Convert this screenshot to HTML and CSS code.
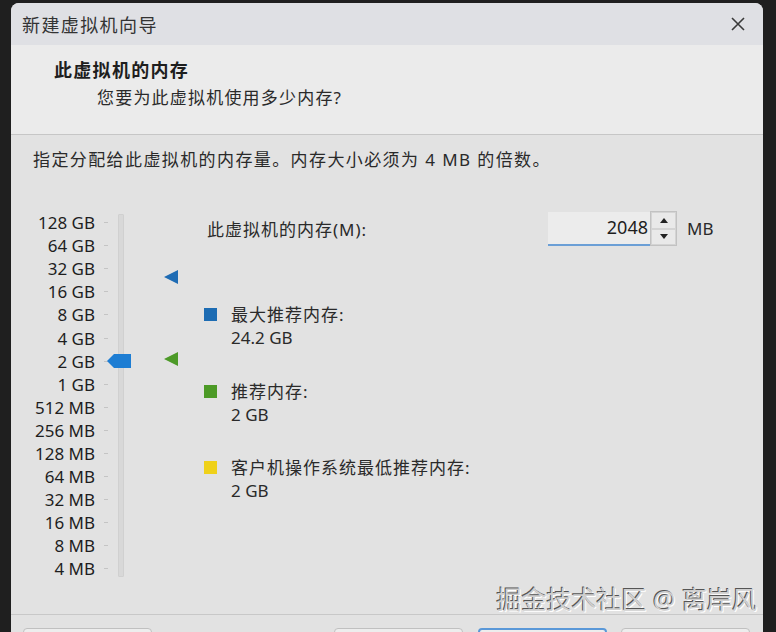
FILE: index.html
```html
<!DOCTYPE html>
<html lang="zh-CN">
<head>
<meta charset="utf-8">
<title>新建虚拟机向导</title>
<link rel="stylesheet" href="styles.css">
</head>
<body>
<div class="dialog">
  <div class="titlebar">
    <span class="title">新建虚拟机向导</span>
    <svg class="close" width="14" height="14" viewBox="0 0 14 14"><path d="M1 1L13 13M13 1L1 13" stroke="#3a3a3a" stroke-width="1.6" fill="none"/></svg>
  </div>
  <div class="header">
    <div class="h-title">此虚拟机的内存</div>
    <div class="h-sub">您要为此虚拟机使用多少内存?</div>
  </div>
  <div class="body">
    <div class="intro">指定分配给此虚拟机的内存量。内存大小必须为 4 MB 的倍数。</div>
    <div class="main">
      <div class="scale">
        <div class="rows">
          <div class="row"><span class="lab">128 GB</span><span class="tick"></span></div>
          <div class="row"><span class="lab">64 GB</span><span class="tick"></span></div>
          <div class="row"><span class="lab">32 GB</span><span class="tick"></span></div>
          <div class="row"><span class="lab">16 GB</span><span class="tick"></span></div>
          <div class="row"><span class="lab">8 GB</span><span class="tick"></span></div>
          <div class="row"><span class="lab">4 GB</span><span class="tick"></span></div>
          <div class="row"><span class="lab">2 GB</span><span class="tick"></span></div>
          <div class="row"><span class="lab">1 GB</span><span class="tick"></span></div>
          <div class="row"><span class="lab">512 MB</span><span class="tick"></span></div>
          <div class="row"><span class="lab">256 MB</span><span class="tick"></span></div>
          <div class="row"><span class="lab">128 MB</span><span class="tick"></span></div>
          <div class="row"><span class="lab">64 MB</span><span class="tick"></span></div>
          <div class="row"><span class="lab">32 MB</span><span class="tick"></span></div>
          <div class="row"><span class="lab">16 MB</span><span class="tick"></span></div>
          <div class="row"><span class="lab">8 MB</span><span class="tick"></span></div>
          <div class="row"><span class="lab">4 MB</span><span class="tick"></span></div>
        </div>
        <div class="track"></div>
        <svg class="thumb" style="top:143px" width="24" height="14" viewBox="0 0 24 14"><polygon points="0,7 7,0 24,0 24,14 7,14" fill="#1d7dd3"/></svg>
        <div class="markers">
          <svg class="marker" style="top:59px" width="14" height="14" viewBox="0 0 14 14"><polygon points="0,7 14,0 14,14" fill="#1f6cb4"/></svg>
          <svg class="marker" style="top:141px" width="14" height="14" viewBox="0 0 14 14"><polygon points="0,7 14,0 14,14" fill="#4d9a28"/></svg>
        </div>
      </div>
      <div class="right">
        <div class="memrow">
          <span class="memlabel">此虚拟机的内存(M):</span>
          <div class="input">2048</div>
          <div class="spin">
            <div class="sbtn"><svg width="8" height="5" viewBox="0 0 8 5"><polygon points="0,5 4,0 8,5" fill="#222"/></svg></div>
            <div class="sbtn"><svg width="8" height="5" viewBox="0 0 8 5"><polygon points="0,0 8,0 4,5" fill="#222"/></svg></div>
          </div>
          <span class="unit">MB</span>
        </div>
        <div class="legend">
          <div class="item">
            <span class="sq sq-blue"></span>
            <div class="itext"><div class="cn">最大推荐内存:</div><div>24.2 GB</div></div>
          </div>
          <div class="item">
            <span class="sq sq-green"></span>
            <div class="itext"><div class="cn">推荐内存:</div><div>2 GB</div></div>
          </div>
          <div class="item">
            <span class="sq sq-yellow"></span>
            <div class="itext"><div class="cn">客户机操作系统最低推荐内存:</div><div>2 GB</div></div>
          </div>
        </div>
      </div>
    </div>
    <div class="watermark">掘金技术社区 @ 离岸风</div>
  </div>
  <div class="footer">
    <button class="btn" aria-label="帮助"></button>
    <div class="spacer"></div>
    <button class="btn" aria-label="上一步"></button>
    <button class="btn btn-focus" aria-label="下一步"></button>
    <button class="btn" aria-label="取消"></button>
  </div>
</div>
</body>
</html>
```
FILE: styles.css
```css
html, body {
  margin: 0;
  padding: 0;
}
body {
  background: #1f1f1f;
  width: 776px;
  height: 632px;
  overflow: hidden;
  font-family: "Noto Sans", "Noto Sans CJK SC", sans-serif;
  color: #1e1e1e;
  font-size: 17px;
}
.dialog {
  margin: 3px 0 0 11px;
  width: 752px;
  height: 629px;
  background: #e2e2e2;
  border-radius: 8px 8px 0 0;
  overflow: hidden;
  display: flex;
  flex-direction: column;
}
.titlebar {
  height: 42px;
  flex: none;
  background: #dfe0e4;
  display: flex;
  align-items: center;
  justify-content: space-between;
  padding: 0 18px 0 11px;
}
.title {
  font-size: 18px;
  letter-spacing: 1.4px;
  color: #333333;
}
.close {
  display: block;
}
.header {
  flex: none;
  background: #ebebeb;
  border-bottom: 1px solid #c6c6c6;
  padding: 13px 0 0 43px;
  box-sizing: border-box;
  height: 90px;
}
.h-title {
  font-size: 18px;
  font-weight: 700;
  letter-spacing: 1.3px;
  line-height: 24px;
}
.h-sub {
  margin-top: 4px;
  padding-left: 43px;
  font-size: 17px;
  letter-spacing: 1.2px;
  line-height: 24px;
  color: #2a2a2a;
}
.body {
  position: relative;
  height: 479px;
  flex: none;
  padding: 13px 0 0 22px;
  box-sizing: border-box;
}
.intro {
  line-height: 24px;
  letter-spacing: 1.4px;
  color: #2a2a2a;
}
.main {
  display: flex;
  margin-top: 39px;
}
.scale {
  position: relative;
  display: flex;
  width: 145px;
  flex: none;
}
.rows {
  display: flex;
  flex-direction: column;
}
.row {
  height: 23.1px;
  display: flex;
  align-items: center;
}
.lab {
  width: 62px;
  text-align: right;
  line-height: 23px;
  white-space: nowrap;
}
.tick {
  width: 4px;
  height: 1px;
  margin-left: 9px;
  background: #c4c4c4;
}
.track {
  width: 4px;
  height: 361px;
  margin: 3px 0 0 10px;
  background: #d8d8d8;
  border: 1px solid #d0d0d0;
  border-radius: 1px;
}
.thumb {
  position: absolute;
  left: 74px;
  display: block;
}
.markers {
  position: relative;
  width: 14px;
  margin-left: 40px;
}
.marker {
  position: absolute;
  left: 0;
  display: block;
}
.right {
  margin-left: 26px;
  display: flex;
  flex-direction: column;
}
.memrow {
  height: 35px;
  display: flex;
  align-items: center;
}
.memlabel {
  width: 341px;
  padding-left: 3px;
  letter-spacing: 1px;
  flex: none;
  color: #2a2a2a;
}
.input {
  width: 102px;
  height: 34px;
  box-sizing: border-box;
  background: #ececec;
  border-bottom: 2px solid #6b9fd6;
  text-align: right;
  padding-right: 2px;
  line-height: 30px;
  font-size: 18px;
}
.spin {
  width: 27px;
  height: 35px;
  box-sizing: border-box;
  display: flex;
  flex-direction: column;
  border: 1px solid #c2c2c2;
  background: #e4e4e4;
}
.sbtn {
  flex: 1;
  display: flex;
  align-items: center;
  justify-content: center;
  border: 1px solid #d4d4d4;
  background: #e9e9e9;
}
.sbtn svg {
  display: block;
}
.unit {
  margin-left: 10px;
  color: #2a2a2a;
}
.legend {
  margin-top: 57px;
  display: flex;
  flex-direction: column;
  gap: 30.5px;
}
.item {
  display: flex;
  align-items: flex-start;
}
.sq {
  width: 13px;
  height: 13px;
  margin-top: 5px;
  flex: none;
}
.sq-blue { background: #1d6cb3; }
.sq-green { background: #4c9a26; }
.sq-yellow { background: #efd11a; }
.itext {
  margin-left: 14px;
  line-height: 23px;
  color: #2a2a2a;
}
.cn {
  letter-spacing: 1px;
}
.watermark {
  position: absolute;
  right: 6px;
  bottom: 0;
  line-height: 30px;
  font-size: 25px;
  color: #cfcfcf;
  text-shadow: -1px -1px 0 #555555, 1px 1px 0 #ffffff;
  white-space: nowrap;
}
.footer {
  flex: none;
  border-top: 1px solid #c8c8c8;
  padding: 13px 13px 0 12px;
  display: flex;
  align-items: flex-start;
  background: #e2e2e2;
}
.spacer {
  flex: 1;
}
.btn {
  width: 129px;
  height: 32px;
  box-sizing: border-box;
  margin-left: 15px;
  background: #ededed;
  border: 1px solid #c0c0c0;
  border-radius: 4px;
  padding: 0;
}
.btn:first-child {
  margin-left: 0;
}
.btn:last-child {
  margin-left: 14px;
}
.btn-focus {
  border: 2px solid #5a98d8;
}
```
